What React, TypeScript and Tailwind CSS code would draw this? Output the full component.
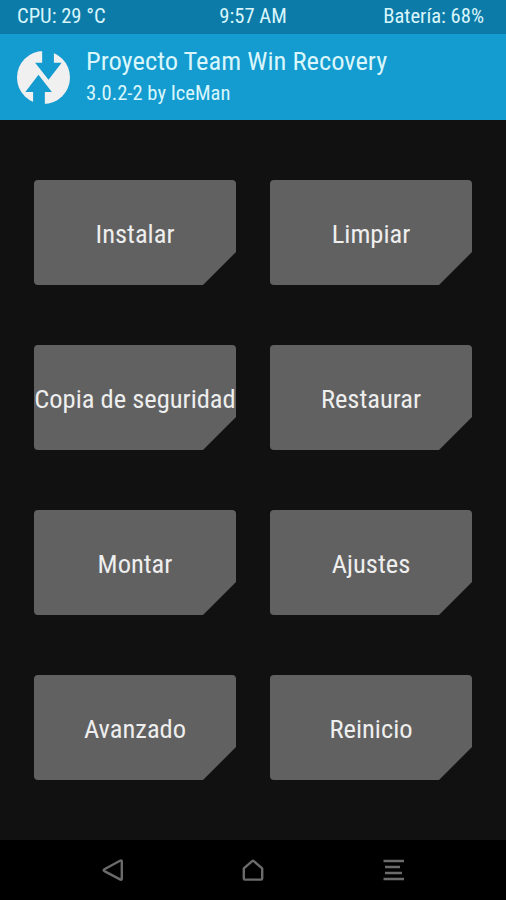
import React from "react";

const menu = [
  "Instalar",
  "Limpiar",
  "Copia de seguridad",
  "Restaurar",
  "Montar",
  "Ajustes",
  "Avanzado",
  "Reinicio",
];

const Logo = () => (
  <svg viewBox="0 0 158 158" className="w-[53px] h-[53px] shrink-0">
    <circle cx="79" cy="79" r="79" fill="#f0f0f0" />
    <path
      d="M75 -2V35H54L94 86L133 35H110V-2Z M83 160V122H104L64 71L25 122H48V160Z"
      fill="#149bcf"
    />
  </svg>
);

const MenuButton = ({ label }: { label: string }) => (
  <button className="relative flex h-[105px] items-center justify-center">
    <svg viewBox="0 0 202 105" className="absolute inset-0 h-full w-full">
      <path
        d="M4 0H198Q202 0 202 4V72L169 105H4Q0 105 0 101V4Q0 0 4 0Z"
        fill="#616161"
      />
    </svg>
    <span className="relative whitespace-nowrap pt-0.5 text-[26.5px] leading-8 text-[#eeeeee]">
      {label}
    </span>
  </button>
);

const App = () => {
  return (
    <div className="flex h-[900px] w-[506px] flex-col overflow-hidden bg-[#111111] font-['Roboto_Condensed','Roboto',sans-serif] [font-stretch:75%]">
      {/* Status bar */}
      <div className="grid h-[34px] grid-cols-3 items-center bg-[#0d7ba8] pb-px text-[20.6px] text-[#d9f6fc]">
        <span className="pl-[17px]">CPU: 29 °C</span>
        <span className="text-center">9:57 AM</span>
        <span className="pr-[22px] text-right">Batería: 68%</span>
      </div>

      {/* Header */}
      <div className="flex h-[86px] items-center gap-4 bg-[#149bcf] pl-[17px]">
        <Logo />
        <div className="flex flex-col pb-0.5 text-[#d9f6fc]">
          <h1 className="text-[26.5px] leading-[34px]">
            Proyecto Team Win Recovery
          </h1>
          <p className="text-[20.6px] leading-[30px]">3.0.2-2 by IceMan</p>
        </div>
      </div>

      {/* Menu */}
      <div className="grid flex-1 grid-cols-2 content-start gap-x-[34px] gap-y-[60px] px-[34px] pt-[60px]">
        {menu.map((label) => (
          <MenuButton key={label} label={label} />
        ))}
      </div>

      {/* Navigation */}
      <div className="flex h-[60px] items-center justify-between bg-black px-[101px]">
        <svg width="24" height="24" viewBox="0 0 24 24" fill="none" stroke="#6b6b6b" strokeWidth="2.4" strokeLinejoin="round">
          <path d="M19 2.8Q20.8 1.8 20.8 3.8V20.4Q20.8 22.4 19 21.4L3.4 13.1Q1.9 12.1 3.4 11.2Z" />
        </svg>
        <svg width="24" height="24" viewBox="0 0 24 24" fill="none" stroke="#6b6b6b" strokeWidth="2.4" strokeLinejoin="round">
          <path d="M11.2 3.2Q12 2.5 12.8 3.2L21.2 10.4V20.6Q21.2 21.6 20.2 21.6H3.8Q2.8 21.6 2.8 20.6V10.4Z" />
        </svg>
        <svg width="24" height="24" viewBox="0 0 24 24" fill="none" stroke="#6b6b6b" strokeWidth="2.5">
          <path d="M2.5 3H23M4 9H19M4 15H21M2.5 21H23" />
        </svg>
      </div>
    </div>
  );
};

export default App;
